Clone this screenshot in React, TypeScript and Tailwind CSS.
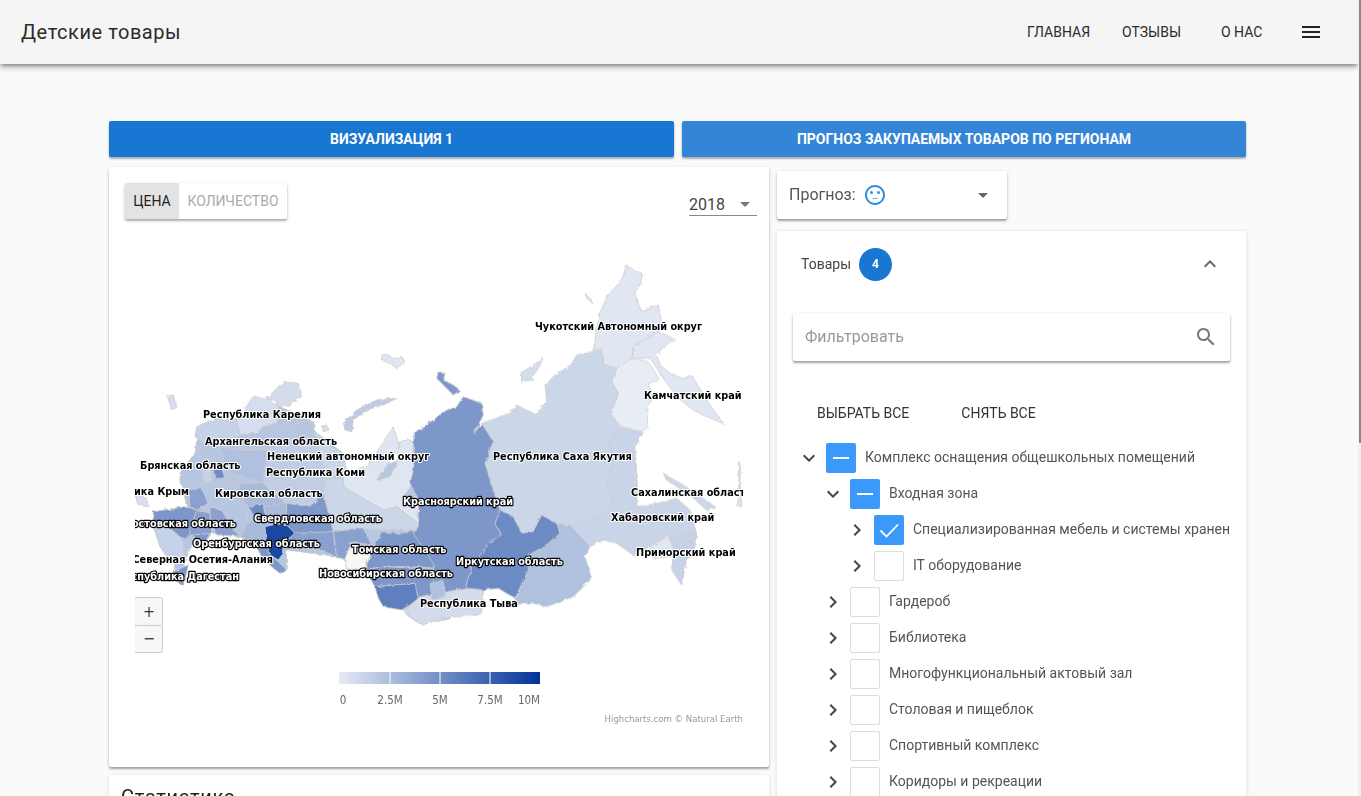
import React from "react";

// Material icon paths
const ICONS = {
  menu: "M3 18h18v-2H3v2zm0-5h18v-2H3v2zm0-7v2h18V6H3z",
  search:
    "M15.5 14h-.79l-.28-.27C15.41 12.59 16 11.11 16 9.5 16 5.91 13.09 3 9.5 3S3 5.91 3 9.5 5.91 16 9.5 16c1.61 0 3.09-.59 4.23-1.57l.27.28v.79l5 4.99L20.49 19l-4.99-5zm-6 0C7.01 14 5 11.99 5 9.5S7.01 5 9.5 5 14 7.01 14 9.5 11.99 14 9.5 14z",
  less: "M12 8l-6 6 1.41 1.41L12 10.83l4.59 4.58L18 14z",
  more: "M16.59 8.59L12 13.17 7.41 8.59 6 10l6 6 6-6z",
  right: "M10 6L8.59 7.41 13.17 12l-4.58 4.59L10 18l6-6z",
  drop: "M7 10l5 5 5-5z",
};

function Icon({ d, className }: { d: string; className?: string }) {
  return (
    <svg viewBox="0 0 24 24" fill="currentColor" className={className}>
      <path d={d} />
    </svg>
  );
}

// Region shapes, traced from 3x crops. West group origin is (130,250), east is (400,250).
const WEST: [string, string][] = [
  ["#b8c7e1", "M150,670 L195,610 L205,530 L320,505 L405,450 L550,515 L555,545 L640,610 L640,680 L850,620 L860,850 L950,900 L960,1080 L870,1060 L820,1080 L735,1010 L705,960 L645,925 L620,920 L470,900 L470,960 L450,970 L425,950 L395,920 L375,880 L330,860 L245,850 L215,895 L190,880 L165,930 L155,1005 L130,985 L130,965 L135,945 L90,890 L70,825 L70,785 L170,770 Z"],
  ["#d6ddee", "M112,438 L130,435 L140,472 L125,480 Z"],
  ["#dfe5f1", "M755,315 L775,312 L785,325 L815,320 L825,335 L800,355 L780,340 L755,330 Z"],
  ["#bfcbe3", "M640,520 L680,480 L740,450 L800,445 L760,465 L710,480 L670,510 L665,545 L645,540 Z"],
  ["#d6ddee", "M575,528 L590,525 L597,540 L580,545 Z"],
  ["#d4dcec", "M405,450 L430,425 L460,395 L505,400 L515,440 L480,465 L445,470 L435,450 Z"],
  ["#d6ddee", "M320,510 L370,440 L410,445 L445,470 L440,520 L400,530 L380,550 L330,555 Z"],
  ["#c6d2e7", "M200,530 L260,505 L320,510 L330,555 L270,590 L225,580 L195,560 Z"],
  ["#b8c7e1", "M380,550 L400,530 L440,520 L470,545 L500,520 L550,515 L555,545 L565,590 L480,565 L410,600 L330,600 L330,555 Z"],
  ["#ccd6e9", "M555,545 L600,590 L640,610 L650,660 L590,690 L565,600 Z"],
  ["#c0cde5", "M410,600 L480,565 L565,590 L590,690 L580,730 L540,770 L470,760 L420,720 L400,700 Z"],
  ["#b0c1df", "M270,590 L330,600 L410,600 L400,700 L330,680 L290,660 Z"],
  ["#b8c7e1", "M150,670 L195,610 L225,580 L270,590 L290,660 L330,680 L320,700 L240,700 L200,710 L150,700 Z"],
  ["#6d8cc5", "M250,660 L275,655 L285,685 L255,685 Z"],
  ["#c6d2e7", "M215,660 L245,660 L248,695 L220,695 Z"],
  ["#b8c7e1", "M150,700 L240,700 L320,700 L345,760 L355,820 L330,860 L260,840 L240,790 L210,770 L175,730 Z"],
  ["#8aa1cf", "M175,720 L215,715 L235,760 L200,780 L180,770 Z"],
  ["#a9bbdb", "M320,700 L400,700 L420,720 L470,760 L470,800 L400,770 L355,770 L345,760 Z"],
  ["#6d8cc5", "M355,770 L400,762 L408,800 L375,802 Z"],
  ["#a9bbdb", "M400,770 L470,760 L470,825 L440,822 L408,800 Z"],
  ["#8aa1cf", "M240,770 L275,780 L310,840 L330,858 L260,855 L245,810 Z"],
  ["#a9bbdb", "M355,820 L375,802 L408,800 L440,822 L405,830 L410,880 L375,880 L330,860 Z"],
  ["#7e97ca", "M375,880 L410,880 L420,915 L445,935 L470,960 L450,970 L425,950 L395,920 Z"],
  ["#dfe5f1", "M640,680 L720,640 L770,560 L790,530 L810,590 L740,690 L780,680 L800,640 L805,580 L830,565 L860,585 L850,620 L850,700 L820,740 L860,780 L870,825 L800,770 L760,780 L690,740 L640,710 Z"],
  ["#ccd6e9", "M590,690 L640,680 L640,710 L690,740 L760,780 L800,770 L870,825 L860,840 L750,840 L700,835 L610,840 L590,770 L580,730 Z"],
  ["#7f98ca", "M470,760 L540,770 L580,730 L590,770 L610,845 L550,855 L495,850 L470,825 Z"],
  ["#8aa1cf", "M495,850 L610,845 L620,920 L560,895 L510,880 L470,900 L465,875 Z"],
  ["#1b46a1", "M405,830 L440,822 L470,825 L495,850 L465,875 L460,910 L445,930 L420,915 L410,880 Z"],
  ["#8aa1cf", "M610,845 L700,835 L725,885 L665,875 L645,930 L620,920 Z"],
  ["#f7f7f7", "M645,925 L665,878 L725,905 L705,960 L650,958 Z"],
  ["#7e97ca", "M725,905 L755,845 L800,850 L845,845 L870,840 L950,900 L960,960 L870,950 L760,950 L705,960 Z"],
  ["#7e97ca", "M705,960 L760,950 L960,960 L960,1080 L865,1050 L855,1000 L735,1010 Z"],
  ["#5f80c0", "M735,1010 L855,1000 L865,1050 L815,1080 L760,1070 L745,1045 Z"],
  ["#d4dcec", "M820,1080 L870,1060 L960,1075 L970,1100 L910,1115 L875,1125 L830,1095 Z"],
  ["#7e97ca", "M70,785 L170,770 L200,780 L180,860 L155,865 L125,840 L70,825 Z"],
  ["#8aa1cf", "M200,780 L240,790 L245,850 L190,855 L175,860 Z"],
  ["#7e97ca", "M190,855 L240,850 L215,895 L190,880 Z"],
  ["#c6d2e7", "M70,830 L125,840 L155,865 L165,930 L135,945 L110,920 L90,890 L80,860 Z"],
  ["#7e97ca", "M130,965 L175,945 L165,990 L155,1005 L130,985 Z"],
  ["#d8dff0", "M15,735 L50,745 L55,770 L25,765 Z"],
];

const EAST: [string, string][] = [
  ["#e0e6f2", "M680,45 L700,60 L727,70 L722,100 L705,135 L725,185 L775,165 L785,215 L775,245 L740,270 L705,285 L695,325 L650,355 L612,345 L605,300 L580,300 L590,240 L600,185 L625,135 L665,90 Z"],
  ["#e0e6f2", "M775,245 L825,268 L790,290 L770,315 L780,345 L810,370 L850,385 L875,375 L920,450 L970,520 L930,505 L880,480 L830,440 L790,385 L752,325 L695,325 L705,285 Z"],
  ["#e8edf5", "M650,355 L695,325 L745,335 L778,388 L745,400 L755,430 L745,470 L740,540 L700,545 L665,535 L640,510 L632,490 L655,430 L635,395 Z"],
  ["#ccd6e9", "M530,315 L575,305 L605,300 L612,345 L650,355 L635,395 L655,430 L632,490 L665,535 L625,570 L640,640 L620,690 L640,760 L600,800 L510,830 L465,820 L425,795 L400,845 L365,850 L340,800 L300,780 L280,720 L255,640 L280,575 L245,520 L330,490 L350,465 L410,495 L440,450 L435,405 L470,370 L510,350 Z"],
  ["#c9d4e8", "M625,570 L665,530 L730,548 L705,590 L712,700 L710,770 L770,760 L830,745 L870,780 L890,850 L830,860 L805,855 L750,890 L700,915 L650,880 L610,870 L570,890 L515,830 L600,800 L640,760 L620,690 L640,640 Z"],
  ["#c6d2e7", "M805,855 L830,860 L890,850 L885,890 L860,930 L845,1005 L815,960 L820,915 Z"],
  ["#e0e6f2", "M750,890 L805,860 L820,890 L815,920 L760,925 Z"],
  ["#cdd7ea", "M790,670 L850,705 L945,770 L925,785 L870,735 L800,690 Z"],
  ["#b0c1df", "M470,820 L515,830 L570,890 L555,920 L575,985 L520,1040 L440,1070 L400,1060 L350,1060 L345,1050 L385,960 L380,920 L445,880 L480,850 Z"],
  ["#6c8ac3", "M300,780 L340,800 L365,850 L400,845 L425,795 L470,820 L480,850 L445,880 L380,920 L385,960 L345,1045 L295,1015 L250,1020 L195,1015 L215,950 L270,875 L305,855 L285,820 Z"],
  ["#7e97ca", "M190,440 L245,460 L250,495 L222,550 L245,520 L280,575 L255,640 L280,720 L300,780 L285,820 L305,855 L270,875 L215,950 L195,1015 L150,1030 L100,1000 L100,940 L60,880 L40,850 L55,830 L55,750 L30,700 L40,660 L40,550 L85,520 L140,480 L170,470 Z"],
  ["#7e97ca", "M115,365 L135,370 L130,390 L160,405 L180,420 L160,435 L125,400 L110,385 Z"],
  ["#d4dcec", "M360,370 L385,355 L430,325 L420,345 L395,390 L365,395 Z"],
  ["#e0e6f2", "M555,130 L575,150 L575,158 L560,145 Z"],
  ["#d4dcec", "M20,1075 L60,1040 L140,1025 L195,1015 L250,1020 L245,1090 L180,1100 L105,1105 L70,1125 L30,1100 Z"],
  ["#b0c1df", "M90,1000 L130,990 L135,1040 L95,1050 Z"],
  ["#e0e6f2", "M1015,630 L1022,650 L1020,690 L1025,770 L1012,770 L1017,700 Z"],
];

// x, y (middle), text, anchor, light label
const LABELS: [number, number, string, "start" | "end", boolean][] = [
  [535, 326, "Чукотский Автономный округ", "start", false],
  [644, 395, "Камчатский край", "start", false],
  [493, 456, "Республика Саха Якутия", "start", false],
  [631, 492, "Сахалинская область", "start", false],
  [611, 517, "Хабаровский край", "start", false],
  [636, 552, "Приморский край", "start", false],
  [420, 603, "Республика Тыва", "start", false],
  [456, 561, "Иркутская область", "start", true],
  [403, 501, "Красноярский край", "start", true],
  [352, 549, "Томская область", "start", true],
  [319, 573, "Новосибирская область", "start", true],
  [254, 518, "Свердловская область", "start", true],
  [193, 543, "Оренбургская область", "start", true],
  [273, 559, "Северная Осетия-Алания", "end", false],
  [239, 576, "Республика Дагестан", "end", true],
  [236, 523, "Ростовская область", "end", true],
  [189, 491, "Республика Крым", "end", false],
  [140, 465, "Брянская область", "start", false],
  [215, 493, "Кировская область", "start", false],
  [266, 472, "Республика Коми", "start", false],
  [267, 456, "Ненецкий автономный округ", "start", false],
  [205, 441, "Архангельская область", "start", false],
  [203, 414, "Республика Карелия", "start", false],
];

function RussiaMap() {
  return (
    <svg viewBox="135 235 608 500" className="ml-[26px] mt-[16px] block h-[500px] w-[608px] font-['DejaVu_Sans_Condensed','DejaVu_Sans',sans-serif]">
      <defs>
        <linearGradient id="legend">
          <stop offset="0" stopColor="#e6ebf5" />
          <stop offset="1" stopColor="#003399" />
        </linearGradient>
        {/* roughens the traced borders so they read as coastline */}
        <filter id="rough" filterUnits="userSpaceOnUse" x="135" y="235" width="608" height="420">
          <feTurbulence type="fractalNoise" baseFrequency="0.22" numOctaves="2" seed="4" />
          <feDisplacementMap in="SourceGraphic" scale="3.5" />
        </filter>
      </defs>
      <g filter="url(#rough)">
        <g transform="translate(130 250) scale(0.3333)" stroke="#cccccc" strokeWidth="2.4" strokeLinejoin="round">
          {WEST.map(([fill, d], i) => (
            <path key={i} d={d} fill={fill} />
          ))}
        </g>
        <g transform="translate(400 250) scale(0.3333)" stroke="#cccccc" strokeWidth="2.4" strokeLinejoin="round">
          {EAST.map(([fill, d], i) => (
            <path key={i} d={d} fill={fill} />
          ))}
        </g>
      </g>
      {LABELS.map(([x, y, text, anchor, light]) => (
        <text
          key={text}
          x={x}
          y={y + 4}
          textAnchor={anchor}
          fontSize="10.8"
          fontWeight="700"
          fill={light ? "#ffffff" : "#000000"}
          stroke={light ? "#000000" : "#ffffff"}
          strokeWidth={light ? "2.4" : "2"}
          strokeLinejoin="round"
          paintOrder="stroke"
        >
          {text}
        </text>
      ))}

      {/* Zoom buttons */}
      <rect x="134.5" y="597.5" width="28" height="28" rx="2" fill="#f7f7f7" stroke="#cccccc" />
      <rect x="134.5" y="625.5" width="28" height="27" rx="2" fill="#f7f7f7" stroke="#cccccc" />
      <text x="149" y="617" textAnchor="middle" fontSize="16" fill="#333333">
        +
      </text>
      <text x="149" y="644" textAnchor="middle" fontSize="16" fill="#333333">
        −
      </text>

      {/* Legend */}
      <rect x="339" y="672" width="201" height="12" fill="url(#legend)" />
      {[389.5, 439.5, 489.5].map((x) => (
        <rect key={x} x={x} y="672" width="1" height="12" fill="#ffffff" />
      ))}
      <g fontSize="11.5" fill="#666666">
        <text x="343" y="704" textAnchor="middle">0</text>
        <text x="390" y="704" textAnchor="middle">2.5M</text>
        <text x="440" y="704" textAnchor="middle">5M</text>
        <text x="490" y="704" textAnchor="middle">7.5M</text>
        <text x="540" y="704" textAnchor="end">10M</text>
      </g>
      <text x="743" y="722" textAnchor="end" fontSize="9.5" fill="#999999">
        Highcharts.com © Natural Earth
      </text>
    </svg>
  );
}

const TREE: { level: number; label: string; state?: "some" | "all"; open?: boolean }[] = [
  { level: 0, label: "Комплекс оснащения общешкольных помещений", state: "some", open: true },
  { level: 1, label: "Входная зона", state: "some", open: true },
  { level: 2, label: "Специализированная мебель и системы хранения", state: "all" },
  { level: 2, label: "IT оборудование" },
  { level: 1, label: "Гардероб" },
  { level: 1, label: "Библиотека" },
  { level: 1, label: "Многофункциональный актовый зал" },
  { level: 1, label: "Столовая и пищеблок" },
  { level: 1, label: "Спортивный комплекс" },
  { level: 1, label: "Коридоры и рекреации" },
];

function TreeRow({ level, label, state, open }: (typeof TREE)[number]) {
  const indent = level === 0 ? "pl-0" : level === 1 ? "pl-[24px]" : "pl-[48px]";
  return (
    <div className={`flex h-[36px] items-center overflow-hidden whitespace-nowrap ${indent}`}>
      <Icon d={open ? ICONS.more : ICONS.right} className="h-[24px] w-[24px] shrink-0 text-[#444]" />
      {state ? (
        <span className="ml-[5px] flex h-[30px] w-[30px] shrink-0 items-center justify-center rounded-[2px] bg-[#3b99fc]">
          {state === "some" ? (
            <span className="h-[2px] w-[16px] bg-white" />
          ) : (
            <svg viewBox="0 0 24 24" className="h-[24px] w-[24px]" fill="none" stroke="#fff" strokeWidth="1.8">
              <path d="M3.5 12.5l6 6L21 6.5" />
            </svg>
          )}
        </span>
      ) : (
        <span className="ml-[5px] h-[30px] w-[30px] shrink-0 rounded-[2px] border border-[#ddd] bg-white" />
      )}
      <span className="mb-[2px] ml-[9px] text-[14px] text-[#555]">{label}</span>
    </div>
  );
}

export default function App() {
  return (
    <div className="flex h-[796px] overflow-hidden bg-[#fafafa] font-[Roboto,sans-serif]">
      <div className="min-w-0 flex-1">
        <header className="flex h-[64px] items-center bg-[#f5f5f5] pl-[21px] text-[#2b2b2b] shadow-[0_2px_4px_-1px_rgba(0,0,0,.4),0_4px_5px_0_rgba(0,0,0,.14),0_1px_10px_0_rgba(0,0,0,.12)]">
          <h1 className="text-[20px] font-normal tracking-[0.55px]">Детские товары</h1>
          <nav className="ml-auto flex items-center text-[14px]">
            <span className="w-[95px]">ГЛАВНАЯ</span>
            <span className="w-[99px]">ОТЗЫВЫ</span>
            <span className="w-[78px]">О НАС</span>
            <Icon d={ICONS.menu} className="mr-[35px] h-[24px] w-[24px] text-[#222]" />
          </nav>
        </header>

        <main className="ml-[109px] w-[1137px] pt-[57px]">
          <div className="grid grid-cols-[565px_564px] gap-[8px]">
            <button className="h-[36px] rounded-[2px] bg-[#1976d2] text-[14px] font-bold text-white shadow-[0_2px_2px_0_rgba(0,0,0,.25),0_1px_3px_0_rgba(0,0,0,.12)]">
              ВИЗУАЛИЗАЦИЯ 1
            </button>
            <button className="h-[36px] rounded-[2px] bg-[#3485d8] text-[14px] font-bold text-white shadow-[0_2px_2px_0_rgba(0,0,0,.25),0_1px_3px_0_rgba(0,0,0,.12)]">
              ПРОГНОЗ ЗАКУПАЕМЫХ ТОВАРОВ ПО РЕГИОНАМ
            </button>
          </div>

          <div className="mt-[10px] grid grid-cols-[660px_469px] gap-[8px]">
            {/* Left column */}
            <div>
              <section className="h-[600px] rounded-[2px] bg-white pt-[16px] shadow-[0_2px_2px_0_rgba(0,0,0,.3),0_1px_4px_0_rgba(0,0,0,.1)]">
                <div className="flex h-[36px] items-start justify-between pl-[16px] pr-[12px]">
                  <div className="flex h-[36px] rounded-[2px] bg-white text-[14px] shadow-[0_2px_2px_0_rgba(0,0,0,.25),0_1px_4px_0_rgba(0,0,0,.12)]">
                    <span className="flex w-[54px] items-center justify-center rounded-l-[2px] bg-[#e3e3e3] text-[#222]">ЦЕНА</span>
                    <span className="flex w-[108px] items-center justify-center text-[#aaa]">КОЛИЧЕСТВО</span>
                  </div>
                  <div className="mt-[9px] flex h-[24px] w-[68px] items-center justify-between border-b border-[#888] text-[16px] text-[#444]">
                    <span className="pt-[2px]">2018</span>
                    <Icon d={ICONS.drop} className="h-[24px] w-[24px] text-[#777]" />
                  </div>
                </div>
                <RussiaMap />
              </section>
              <section className="mt-[8px] h-[60px] rounded-[2px] bg-white pl-[12px] pt-[7px] shadow-[0_1px_4px_0_rgba(0,0,0,.12)]">
                <h2 className="text-[20px] font-normal tracking-[0.7px] text-[#222]">Статистика</h2>
              </section>
            </div>

            {/* Right column */}
            <div className="pt-[4px]">
              <div className="flex h-[48px] w-[230px] items-center rounded-[2px] bg-white pl-[12px] pr-[12px] text-[16px] text-[#555] shadow-[0_2px_2px_0_rgba(0,0,0,.3),0_1px_4px_0_rgba(0,0,0,.12)]">
                <span>Прогноз:</span>
                <svg viewBox="0 0 24 24" className="ml-[7px] h-[24px] w-[24px] text-[#2f8fe5]" fill="currentColor">
                  <circle cx="15.5" cy="9.5" r="1.5" />
                  <circle cx="8.5" cy="9.5" r="1.5" />
                  <path d="M11.99 2C6.47 2 2 6.48 2 12s4.47 10 9.99 10C17.52 22 22 17.52 22 12S17.52 2 11.99 2zM12 20c-4.42 0-8-3.58-8-8s3.58-8 8-8 8 3.58 8 8-3.58 8-8 8z" />
                  <path d="M9.5 15.4c.8.5 1.6.7 2.5.7s1.7-.2 2.5-.7l-.4-.7c-.6.4-1.3.6-2.1.6s-1.5-.2-2.1-.6z" />
                </svg>
                <Icon d={ICONS.drop} className="ml-auto h-[24px] w-[24px] text-[#666]" />
              </div>

              <section className="mt-[12px] h-[600px] rounded-[2px] bg-white shadow-[0_1px_4px_0_rgba(0,0,0,.14)]">
                <div className="flex h-[66px] items-center pl-[24px] pr-[24px]">
                  <span className="text-[14px] text-[#444]">Товары</span>
                  <span className="ml-[8px] flex h-[33px] w-[33px] items-center justify-center rounded-full bg-[#1976d2] text-[12px] font-bold text-white">4</span>
                  <Icon d={ICONS.less} className="ml-auto h-[24px] w-[24px] text-[#666]" />
                </div>

                <div className="ml-[16px] mt-[16px] flex h-[48px] w-[437px] items-center rounded-[2px] bg-white pl-[12px] pr-[12px] shadow-[0_2px_2px_0_rgba(0,0,0,.3),0_1px_4px_0_rgba(0,0,0,.12)]">
                  <span className="text-[16px] text-[#999]">Фильтровать</span>
                  <Icon d={ICONS.search} className="ml-auto h-[24px] w-[24px] text-[#777]" />
                </div>

                <div className="ml-[40px] mt-[34px] flex h-[36px] items-center text-[14px] text-[#333]">
                  <button className="mr-[52px]">ВЫБРАТЬ ВСЕ</button>
                  <button>СНЯТЬ ВСЕ</button>
                </div>

                <div className="ml-[20px] mt-[9px] w-[433px]">
                  {TREE.map((row) => (
                    <TreeRow key={row.label} {...row} />
                  ))}
                </div>
              </section>
            </div>
          </div>
        </main>
      </div>

      {/* Scrollbar */}
      <div className="w-[3px] shrink-0 bg-[#f1f1f1]">
        <div className="ml-[1px] h-[443px] bg-[#888]" />
      </div>
    </div>
  );
}
